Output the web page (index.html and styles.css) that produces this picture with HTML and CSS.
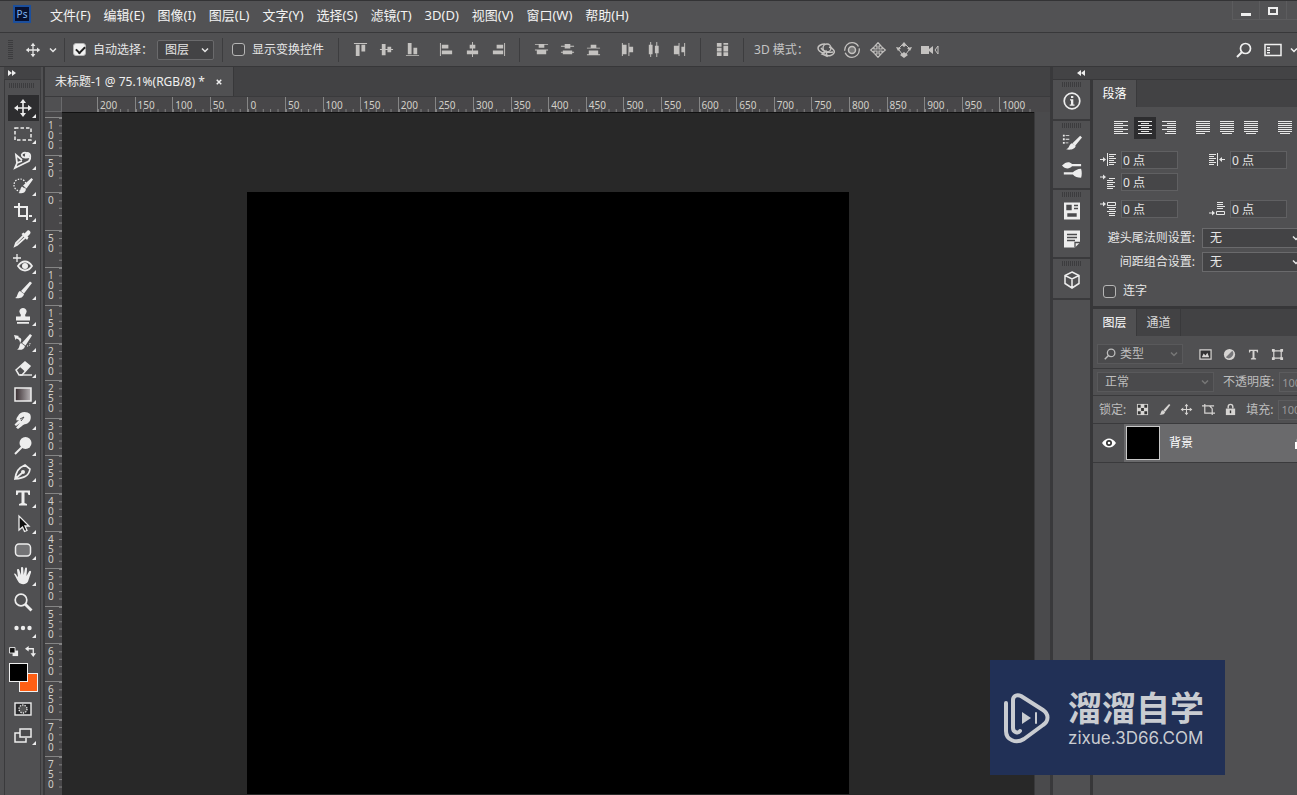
FILE: index.html
```html
<!DOCTYPE html>
<html lang="zh-CN">
<head>
<meta charset="utf-8">
<title>未标题-1</title>
<link rel="stylesheet" href="styles.css">
</head>
<body>
<svg class="sprite" aria-hidden="true">
  <symbol id="move" viewBox="0 0 20 20"><path d="M10 3v14M3 10h14" stroke="currentColor" stroke-width="1.6"/><path d="M10 1l3 4H7zM10 19l3-4H7zM1 10l4-3v6zM19 10l-4-3v6z" fill="currentColor"/></symbol>
  <symbol id="chev" viewBox="0 0 10 10"><path d="M2 3.500l3 3 3-3" fill="none" stroke="currentColor" stroke-width="1.500"/></symbol>
  <symbol id="marquee" viewBox="0 0 20 20"><rect x="2" y="4" width="16" height="12" fill="none" stroke="currentColor" stroke-width="1.500" stroke-dasharray="3.500 2"/></symbol>
  <symbol id="lasso" viewBox="0 0 20 20"><path d="M9 10L3 5l1 8-2 5 8-4 6-3c2-3 2-8-2-8-4-1-6 1-5 3 1 2 5 2 8 1M4 13l5-2M12 4h4M12 6h4" fill="none" stroke="currentColor" stroke-width="1.800"/></symbol>
  <symbol id="quick" viewBox="0 0 20 20"><circle cx="7" cy="9" r="6" fill="none" stroke="currentColor" stroke-width="1.200" stroke-dasharray="1.500 1.300"/><path d="M18.500 2l1.500 1.500-6.500 9-3.500-3zM9 10.500l4 3c-1 4-4 4-7.500 3.500 2-1 1.500-5 3.500-6.500z" fill="currentColor"/></symbol>
  <symbol id="crop" viewBox="0 0 20 20"><path d="M6 1v13h8M1 5h13v13M16 14h3" fill="none" stroke="currentColor" stroke-width="2"/></symbol>
  <symbol id="dropper" viewBox="0 0 20 20"><path d="M4 17l-2 1 1-3 8-8 2 2z" fill="none" stroke="currentColor" stroke-width="1.800"/><path d="M8.500 6l2-1.500 1 1L14 3c1-2 5 1 3 3l-2.500 2.500 1 1L14 12z" fill="currentColor"/></symbol>
  <symbol id="heal" viewBox="0 0 20 20"><path d="M4 0v8M0 4h8" stroke="currentColor" stroke-width="1.300"/><path d="M5 12c4-6 10-6 14 0-4 6-10 6-14 0z" fill="none" stroke="currentColor" stroke-width="1.800"/><circle cx="12" cy="12" r="3" fill="currentColor"/></symbol>
  <symbol id="brush" viewBox="0 0 20 20"><path d="M17 1.500L19 3l-8 10.500-3-2.500zM7 11l4 3c-1 4.500-5.500 4.500-9 4 3-1 2-6 5-7z" fill="currentColor"/></symbol>
  <symbol id="stamp" viewBox="0 0 20 20"><path d="M10 2a3.500 3.500 0 0 1 3 5.500c-1 1-1 2-.5 3H17v4H3v-4h4.500c.5-1 .5-2-.5-3A3.500 3.500 0 0 1 10 2zM4 16h12v1.700H4z" fill="currentColor"/></symbol>
  <symbol id="history" viewBox="0 0 20 20"><path d="M17 2l2 1.500-6.500 10-3.500-2.500zM8 11l4 3c-1 4.500-5 4-8 3.500 3-1 2-5.500 4-6.500zM1 3l5 1-1 1c4 1 4 3 2 6C7 8 5 7 3.500 6.500l-1 1.500z" fill="currentColor"/><path d="M14 14c3 0 3-1 3-3" fill="none" stroke="currentColor" stroke-dasharray="1 1"/></symbol>
  <symbol id="eraser" viewBox="0 0 20 20"><path d="M3 12l9-8 5 4-8 9H6z" fill="none" stroke="currentColor" stroke-width="1.500"/><path d="M7 9l5-5 5 4-5 5.500z" fill="currentColor"/><path d="M7 17h12" stroke="currentColor" stroke-width="1.400"/></symbol>
  <symbol id="gradient" viewBox="0 0 20 20"><defs><linearGradient id="gg"><stop stop-color="#352a2d"/><stop offset="1" stop-color="#b8b4b6"/></linearGradient></defs><rect x="2" y="4" width="16" height="13" fill="url(#gg)" stroke="currentColor" stroke-width="1.500"/></symbol>
  <symbol id="smudge" viewBox="0 0 20 20"><path d="M5 6c2-5 9-5 12-2 2 4 0 9-4 10-2 0-3 1-4 2l-4 3-2-1.500 4-4.500-4 3-1.500-1.500L6 10l-2.500.5C3 9 4 7 5 6z" fill="currentColor"/><path d="M7 9l4-2-3 4" fill="none" stroke="#505052"/></symbol>
  <symbol id="dodge" viewBox="0 0 20 20"><circle cx="12.500" cy="7" r="6" fill="currentColor"/><path d="M9 11l-7 7" stroke="currentColor" stroke-width="2"/></symbol>
  <symbol id="pen" viewBox="0 0 20 20"><path d="M2 17c1-7 3-11 10-14l5 4c-1 7-6 9-15 10zM2 17l7-6" fill="none" stroke="currentColor" stroke-width="1.700"/><circle cx="10" cy="10" r="2" fill="currentColor"/></symbol>
  <symbol id="type" viewBox="0 0 20 20"><path d="M3 2.500h14V7h-1.500L14.500 4.500H11.500V15l2.500 1v1.500H6V16l2.500-1V4.500h-3L4.500 7H3z" fill="currentColor"/></symbol>
  <symbol id="arrow" viewBox="0 0 20 20"><path d="M6 2v14l3.500-3 2 4.500 2.500-1-2-4.500h4z" fill="#111" stroke="currentColor" stroke-width="1.300"/></symbol>
  <symbol id="shape" viewBox="0 0 20 20"><rect x="2.500" y="4" width="15" height="12" rx="3.500" fill="#747476" stroke="currentColor" stroke-width="1.500"/></symbol>
  <symbol id="hand" viewBox="0 0 20 20"><path d="M1 8c1-1 2 0 3 2l1 1L4 4c0-1.500 2-1.500 2.300 0L8 9V2c0-1.500 2-1.500 2.200 0l.5 7L12 2.500c.3-1.500 2.300-1 2 .5L13.500 10 16 5.500c1-1.500 2.500-.5 2 1l-3 9c-2 4-8 3-9.500.5-2-3-3-6-4.500-8z" fill="currentColor"/></symbol>
  <symbol id="zoom" viewBox="0 0 20 20"><circle cx="8" cy="8" r="5.800" fill="none" stroke="currentColor" stroke-width="1.700"/><path d="M12 12l6.500 6.500" stroke="currentColor" stroke-width="2.800"/></symbol>
  <symbol id="dots" viewBox="0 0 20 20"><g fill="currentColor"><circle cx="3.500" cy="10" r="2.200"/><circle cx="10" cy="10" r="2.200"/><circle cx="16.500" cy="10" r="2.200"/></g></symbol>
  <symbol id="mask" viewBox="0 0 20 20"><rect x="2" y="4" width="16" height="12" fill="#29292b" stroke="currentColor" stroke-width="1.400"/><circle cx="10" cy="10" r="4" fill="#555" stroke="currentColor" stroke-width="1.300" stroke-dasharray="1.300 1.200"/></symbol>
  <symbol id="screen" viewBox="0 0 20 20"><path d="M7 8H2v9h11v-4" fill="none" stroke="currentColor" stroke-width="1.500"/><rect x="7" y="4" width="11" height="8" fill="#4b4b4d" stroke="currentColor" stroke-width="1.500"/></symbol>
  <symbol id="reset" viewBox="0 0 12 12"><path d="M5 5h6v6H5z" fill="currentColor"/><path d="M1.700 1.700h6v6h-6z" fill="#111" stroke="currentColor"/></symbol>
  <symbol id="swap" viewBox="0 0 12 12"><path d="M3 3h6v6" fill="none" stroke="currentColor" stroke-width="1.400"/><path d="M0 3l4-3v6zM9 12L6 8h6z" fill="currentColor"/></symbol>

  <symbol id="al-t" viewBox="0 0 16 16"><path d="M1 1h14v1H1zM3 3h4v12H3zM9 3h4v7H9z" fill="currentColor"/></symbol>
  <symbol id="al-m" viewBox="0 0 16 16"><path d="M1 7.500h14v1H1zM3 2h4v12H3zM9 5h4v6H9z" fill="currentColor"/></symbol>
  <symbol id="al-b" viewBox="0 0 16 16"><path d="M1 14h14v1H1zM3 1h4v12H3zM9 6h4v7H9z" fill="currentColor"/></symbol>
  <symbol id="al-l" viewBox="0 0 16 16"><path d="M1 1h1v14H1zM3 3h7v4H3zM3 9h11v4H3z" fill="currentColor"/></symbol>
  <symbol id="al-c" viewBox="0 0 16 16"><path d="M7.500 0h1v16h-1zM5 3h6v4H5zM2 9h12v4H2z" fill="currentColor"/></symbol>
  <symbol id="al-r" viewBox="0 0 16 16"><path d="M14 1h1v14h-1zM6 3h7v4H6zM2 9h11v4H2z" fill="currentColor"/></symbol>
  <symbol id="di-t" viewBox="0 0 16 16"><path d="M1 2h14v1H1zM5 3h6v3H5zM1 8h14v1H1zM3 9h10v4H3z" fill="currentColor"/></symbol>
  <symbol id="di-m" viewBox="0 0 16 16"><path d="M1 4h14v1H1zM5 2h6v5H5zM1 10.500h14v1H1zM3 9h10v4H3z" fill="currentColor"/></symbol>
  <symbol id="di-b" viewBox="0 0 16 16"><path d="M1 6h14v1H1zM5 3h6v3H5zM1 13h14v1H1zM3 9h10v4H3z" fill="currentColor"/></symbol>
  <symbol id="di-l" viewBox="0 0 16 16"><path d="M2 1h1v14H2zM3 3h4v10H3zM9 1h1v14H9zM10 5h4v6h-4z" fill="currentColor"/></symbol>
  <symbol id="di-c" viewBox="0 0 16 16"><path d="M4.500 0h1v16h-1zM3 3h4v10H3zM11 0h1v16h-1zM9.500 4h4v8h-4z" fill="currentColor"/></symbol>
  <symbol id="di-r" viewBox="0 0 16 16"><path d="M7 1h1v14H7zM2 4h5v9H2zM13 1h1v14h-1zM10 5h3v6h-3z" fill="currentColor"/></symbol>
  <symbol id="auto" viewBox="0 0 16 16"><path d="M2 1h5v4H2zM2 6h5v4H2zM2 11h5v4H2zM9 1h5v2H9zM9 4h5v6H9zM9 11h5v4H9z" fill="currentColor"/></symbol>
  <symbol id="orbit" viewBox="0 0 18 16"><path d="M8 11C3 11 1 8 1 6s3-4 7-4M12 5c4 1 6 4 5 6s-5 4-9 2" fill="none" stroke="currentColor" stroke-width="1.500"/><circle cx="10" cy="6" r="4" fill="none" stroke="currentColor" stroke-width="1.400"/><path d="M4 6c3 4 7 5 12 4M9 9l-4 3 5 2z" fill="none" stroke="currentColor" stroke-width="1.400"/></symbol>
  <symbol id="roll" viewBox="0 0 16 16"><circle cx="8" cy="8" r="7.300" fill="none" stroke="currentColor" stroke-width="1.300" stroke-dasharray="20 2"/><circle cx="8" cy="8" r="3.500" fill="#777" stroke="currentColor" stroke-width="1.500"/></symbol>
  <symbol id="pan" viewBox="0 0 16 16"><path d="M8 .7L11 4H9v3h3V5l3.300 3L12 11V9H9v3h2l-3 3.300L5 12h2V9H4v2L.7 8 4 5v2h3V4H5z" fill="none" stroke="currentColor" stroke-width="1.200"/></symbol>
  <symbol id="slide" viewBox="0 0 18 16"><path d="M9 0l2.500 3L9 5 6.500 3zM9 16l4-3-4-3-4 3zM1 5l5 1-3 3zM17 5l-5 1 3 3z" fill="currentColor"/><path d="M4 6l3-3M14 6l-3-3M4 8l3 4M14 8l-3 4" fill="none" stroke="currentColor"/></symbol>
  <symbol id="cam" viewBox="0 0 18 14"><path d="M0 3h8v8H0zM8 6l4-3v8L8 8z" fill="currentColor"/><path d="M17 3l-3 4 3 4z" fill="none" stroke="currentColor"/></symbol>
  <symbol id="search" viewBox="0 0 16 16"><circle cx="9.500" cy="6.500" r="5" fill="none" stroke="currentColor" stroke-width="1.700"/><path d="M6 10l-5 5" stroke="currentColor" stroke-width="2"/></symbol>
  <symbol id="space" viewBox="0 0 18 14"><path d="M1 1.500h16v11H1z" fill="none" stroke="currentColor" stroke-width="1.500"/><path d="M3 4h3v1.500H3zM3 6.500h3V8H3zM3 9h3v1.500H3z" fill="currentColor"/></symbol>

  <symbol id="info" viewBox="0 0 20 20"><circle cx="10" cy="10" r="7.800" fill="none" stroke="currentColor" stroke-width="1.700"/><path d="M9 5h2.300v2H9zM8 8.300h3.300V14H9V9.500H8zM7.700 13.500h4.800v1.200H7.700z" fill="currentColor"/></symbol>
  <symbol id="presets" viewBox="0 0 22 20"><path d="M1 2h2v2H1zM4 2.500h4v1H4zM1 6h2v2H1zM4 6.500h4v1H4zM1 10h2v2H1zM4 10.500h3v1H4zM20 3l2 2-7.500 9-3-2.500zM11 11.500l4 3c-1 4-7 4.500-10.500 3.500 4-1 3-5.500 6.500-6.500z" fill="currentColor"/></symbol>
  <symbol id="brushes" viewBox="0 0 22 20"><path d="M0 5c4-4 8-5 11-1.500h10v2.500H11c-3 3.500-8 3-11-1zM2 12.500h10c2-2 5-4 9-4 1 3 1 7 0 10-4 0-7-1-9-3.500H2z" fill="currentColor"/></symbol>
  <symbol id="chars" viewBox="0 0 20 20"><path d="M2 1.500h16v17H2z" fill="currentColor"/><path d="M5 4.500h4v4H5zM12 4.500h4M12 7.500h4M6 13h8v2H6z" fill="#4b4b4d" stroke="#4b4b4d" stroke-width="1.400"/></symbol>
  <symbol id="notes" viewBox="0 0 20 20"><path d="M2 1.500h16v12L13 18.500H2z" fill="currentColor"/><path d="M5 5.500h10M5 8.500h10M5 11.500h8M13 18.500v-5h5" fill="none" stroke="#4b4b4d" stroke-width="1.300"/></symbol>
  <symbol id="cube" viewBox="0 0 20 20"><path d="M10 2l7 3.500v8L10 18l-7-4.500v-8zM3 5.500L10 9l7-3.500M10 9v9" fill="none" stroke="currentColor" stroke-width="1.500"/></symbol>

  <symbol id="p-l" viewBox="0 0 16 16"><path d="M1 1.500h14M1 3.500h9M1 5.500h14M1 7.500h9M1 9.500h14M1 11.500h9M1 13.500h14" stroke="currentColor"/></symbol>
  <symbol id="p-c" viewBox="0 0 16 16"><path d="M1 1.500h14M4 3.500h8M1 5.500h14M4 7.500h8M1 9.500h14M4 11.500h8M1 13.500h14" stroke="currentColor"/></symbol>
  <symbol id="p-r" viewBox="0 0 16 16"><path d="M1 1.500h14M6 3.500h9M1 5.500h14M6 7.500h9M1 9.500h14M6 11.500h9M4 13.500h11" stroke="currentColor"/></symbol>
  <symbol id="p-j" viewBox="0 0 16 16"><path d="M1 1.500h14M1 3.500h14M1 5.500h14M1 7.500h14M1 9.500h14M1 11.500h14M1 13.500h9" stroke="currentColor"/></symbol>
  <symbol id="p-f" viewBox="0 0 16 16"><path d="M1 1.500h14M1 3.500h14M1 5.500h14M1 7.500h14M1 9.500h14M1 11.500h14M3 13.500h10" stroke="currentColor"/></symbol>
  <symbol id="i-l" viewBox="0 0 16 16"><path d="M0 7.500h4M7.500 1v13M9 2.500h7M9 4.500h5M9 6.500h7M9 8.500h5M9 10.500h7M9 12.500h5" stroke="currentColor"/><path d="M3 5L6 7.500 3 10z" fill="currentColor"/></symbol>
  <symbol id="i-r" viewBox="0 0 16 16"><path d="M12 7.500h4M8.500 1v13M0 2.500h7M0 4.500h5M0 6.500h7M0 8.500h5M0 10.500h7M0 12.500h5" stroke="currentColor"/><path d="M13 5l-3 2.500 3 2.500z" fill="currentColor"/></symbol>
  <symbol id="i-f" viewBox="0 0 16 16"><path d="M0 3h4M9 4.500h6M7 6.500h6M7 8.500h8M7 10.500h6M7 12.500h8M7 14.500h6" stroke="currentColor"/><path d="M3 .5L6 3 3 5.500z" fill="currentColor"/></symbol>
  <symbol id="i-b" viewBox="0 0 16 16"><path d="M0 3h4M7.500 1.500h8v3h-8zM7 6.500h9M9 8.500h6M7 10.500h9M9 12.500h6M9 14.500h6" fill="none" stroke="currentColor"/><path d="M3 .5L6 3 3 5.500z" fill="currentColor"/></symbol>
  <symbol id="i-a" viewBox="0 0 16 16"><path d="M0 12h4M8 1.500h6M8 3.500h6M8 5.500h8M8 7.500h6M7.500 10.500h8v3h-8z" fill="none" stroke="currentColor"/><path d="M3 9.500L6 12l-3 2.500z" fill="currentColor"/></symbol>
  <symbol id="f-img" viewBox="0 0 14 14"><path d="M1 2h12v10H1z" fill="#333" stroke="currentColor" stroke-width="1.300"/><path d="M3 10l2-4 2 2 2-3 2 5z" fill="currentColor"/></symbol>
  <symbol id="f-adj" viewBox="0 0 14 14"><circle cx="7" cy="7" r="6" fill="currentColor"/><path d="M3 10l7-7a5 5 0 0 1-7 7z" fill="#77777a"/></symbol>
  <symbol id="f-shape" viewBox="0 0 14 14"><path d="M3 3h8v8H3z" fill="none" stroke="currentColor" stroke-width="1.300"/><path d="M1 1h3v3H1zM10 1h3v3h-3zM1 10h3v3H1zM10 10h3v3h-3z" fill="currentColor"/></symbol>
  <symbol id="check" viewBox="0 0 14 14"><path d="M1 1h12v12H1z" fill="currentColor"/><path d="M2 2h3v3H2zM9 2h3v3H9zM5.500 5.500h3v3h-3zM2 9h3v3H2zM9 9h3v3H9z" fill="#333"/></symbol>
  <symbol id="board" viewBox="0 0 14 14"><path d="M0 3h13M3 1v10h11M11 6v7M8 3l3 3" fill="none" stroke="currentColor" stroke-width="1.300"/></symbol>
  <symbol id="lock" viewBox="0 0 14 14"><path d="M2 6h10v7H2z" fill="currentColor"/><path d="M4.500 6V4a2.500 2.500 0 0 1 5 0v2" fill="none" stroke="currentColor" stroke-width="1.500"/><path d="M7 8v3" stroke="#333" stroke-width="1.500"/></symbol>
  <symbol id="eye" viewBox="0 0 14 14"><path d="M0 7c4-6 10-6 14 0-4 6-10 6-14 0z" fill="currentColor"/><circle cx="7" cy="7" r="3" fill="#333"/><circle cx="7" cy="7" r="1.300" fill="currentColor"/></symbol>
</svg>

<div class="app">
  <header class="menubar">
    <span class="logo">Ps</span>
    <nav class="menus">
      <button>文件(F)</button><button>编辑(E)</button><button>图像(I)</button><button>图层(L)</button><button>文字(Y)</button><button>选择(S)</button><button>滤镜(T)</button><button>3D(D)</button><button>视图(V)</button><button>窗口(W)</button><button>帮助(H)</button>
    </nav>
    <div class="winbtns">
      <button aria-label="最小化"><i class="min"></i></button><button aria-label="最大化"><i class="max"></i></button><button aria-label="关闭"></button>
    </div>
  </header>

  <div class="options">
    <i class="vgrip"></i>
    <button class="toolpick" aria-label="移动工具"><svg class="i16"><use href="#move"/></svg><svg class="i10"><use href="#chev"/></svg></button>
    <i class="sep"></i>
    <label class="opt"><input type="checkbox" checked>自动选择：</label>
    <span class="pick"><select aria-label="自动选择"><option>图层</option></select><svg class="i10"><use href="#chev"/></svg></span>
    <i class="sep"></i>
    <label class="opt transform"><input type="checkbox">显示变换控件</label>
    <i class="sep"></i>
    <div class="grp"><button aria-label="顶对齐"><svg><use href="#al-t"/></svg></button><button aria-label="垂直居中对齐"><svg><use href="#al-m"/></svg></button><button aria-label="底对齐"><svg><use href="#al-b"/></svg></button></div>
    <div class="grp"><button aria-label="左对齐"><svg><use href="#al-l"/></svg></button><button aria-label="水平居中对齐"><svg><use href="#al-c"/></svg></button><button aria-label="右对齐"><svg><use href="#al-r"/></svg></button></div>
    <i class="sep"></i>
    <div class="grp"><button aria-label="按顶分布"><svg><use href="#di-t"/></svg></button><button aria-label="垂直居中分布"><svg><use href="#di-m"/></svg></button><button aria-label="按底分布"><svg><use href="#di-b"/></svg></button></div>
    <div class="grp"><button aria-label="按左分布"><svg><use href="#di-l"/></svg></button><button aria-label="水平居中分布"><svg><use href="#di-c"/></svg></button><button aria-label="按右分布"><svg><use href="#di-r"/></svg></button></div>
    <i class="sep"></i>
    <div class="grp"><button aria-label="自动对齐"><svg><use href="#auto"/></svg></button></div>
    <i class="sep"></i>
    <span class="mode">3D 模式：</span>
    <div class="grp three"><button aria-label="环绕"><svg><use href="#orbit"/></svg></button><button aria-label="滚动"><svg><use href="#roll"/></svg></button><button aria-label="平移"><svg><use href="#pan"/></svg></button><button aria-label="滑动"><svg><use href="#slide"/></svg></button><button aria-label="变焦"><svg><use href="#cam"/></svg></button></div>
    <div class="tail"><button aria-label="搜索"><svg class="i16"><use href="#search"/></svg></button><button aria-label="工作区"><svg class="i18"><use href="#space"/></svg><svg class="i10"><use href="#chev"/></svg></button></div>
  </div>

  <main class="main">
    <aside class="toolcol">
      <button class="expand" aria-label="展开工具栏"><svg class="dbl" viewBox="0 0 8 6"><path d="M0 0l4 3-4 3zM4 0l4 3-4 3z" fill="currentColor"/></svg></button>
      <div class="tools">
        <i class="hgrip"></i>
        <button class="on" aria-label="移动"><svg><use href="#move"/></svg></button>
        <button aria-label="选框"><svg><use href="#marquee"/></svg></button>
        <button aria-label="套索"><svg><use href="#lasso"/></svg></button>
        <button aria-label="快速选择"><svg><use href="#quick"/></svg></button>
        <button aria-label="裁剪"><svg><use href="#crop"/></svg></button>
        <button aria-label="吸管"><svg><use href="#dropper"/></svg></button>
        <button aria-label="红眼"><svg><use href="#heal"/></svg></button>
        <button aria-label="画笔"><svg><use href="#brush"/></svg></button>
        <button aria-label="图章"><svg><use href="#stamp"/></svg></button>
        <button aria-label="历史画笔"><svg><use href="#history"/></svg></button>
        <button aria-label="橡皮擦"><svg><use href="#eraser"/></svg></button>
        <button aria-label="渐变"><svg><use href="#gradient"/></svg></button>
        <button aria-label="涂抹"><svg><use href="#smudge"/></svg></button>
        <button aria-label="减淡"><svg><use href="#dodge"/></svg></button>
        <button aria-label="钢笔"><svg><use href="#pen"/></svg></button>
        <button aria-label="文字"><svg><use href="#type"/></svg></button>
        <button aria-label="路径选择"><svg><use href="#arrow"/></svg></button>
        <button aria-label="圆角矩形"><svg><use href="#shape"/></svg></button>
        <button aria-label="抓手"><svg><use href="#hand"/></svg></button>
        <button class="single" aria-label="缩放"><svg><use href="#zoom"/></svg></button>
        <button aria-label="更多"><svg><use href="#dots"/></svg></button>
        <div class="mini"><svg><use href="#reset"/></svg><svg><use href="#swap"/></svg></div>
        <div class="swatches"><button class="back" aria-label="背景色"></button><button class="fore" aria-label="前景色"></button></div>
        <button class="single" aria-label="快速蒙版"><svg><use href="#mask"/></svg></button>
        <button aria-label="屏幕模式"><svg><use href="#screen"/></svg></button>
      </div>
    </aside>

    <section class="doc">
      <div class="tabs"><div class="tab"><span>未标题-1 @ 75.1%(RGB/8) *</span><button aria-label="关闭文档"><svg viewBox="0 0 8 8"><path d="M1 1l6 6M7 1L1 7" stroke="currentColor" stroke-width="2"/></svg></button></div></div>
      <div class="view">
        <div class="corner"></div>
        <div class="ruler-x">
          <div class="run"><span>200</span><span>150</span><span>100</span><span>50</span><span>0</span></div>
          <div class="run"><span>50</span><span>100</span><span>150</span><span>200</span><span>250</span></div>
          <div class="run"><span>300</span><span>350</span><span>400</span><span>450</span><span>500</span></div>
          <div class="run"><span>550</span><span>600</span><span>650</span><span>700</span><span>750</span></div>
          <div class="run"><span>800</span><span>850</span><span>900</span><span>950</span><span>1000</span></div>
        </div>
        <div class="ruler-y">
          <div class="run"><span>100</span><span>50</span><span>0</span><span>50</span><span>100</span></div>
          <div class="run"><span>150</span><span>200</span><span>250</span><span>300</span><span>350</span></div>
          <div class="run"><span>400</span><span>450</span><span>500</span><span>550</span><span>600</span></div>
          <div class="run"><span>650</span><span>700</span><span>750</span></div>
        </div>
        <div class="stage"><div class="page"></div></div>
        <div class="scroll"></div>
      </div>
    </section>

    <div class="dock">
      <button class="collapse" aria-label="折叠面板"><svg class="dbl" viewBox="0 0 8 6"><path d="M4 0L0 3l4 3zM8 0L4 3l4 3z" fill="currentColor"/></svg></button>
      <div class="cols">
        <aside class="strip">
          <div class="set"><i class="hgrip"></i><button aria-label="信息"><svg><use href="#info"/></svg></button></div>
          <div class="set"><i class="hgrip"></i><button aria-label="画笔预设"><svg><use href="#presets"/></svg></button><button aria-label="画笔"><svg><use href="#brushes"/></svg></button></div>
          <div class="set"><i class="hgrip"></i><button aria-label="字符"><svg><use href="#chars"/></svg></button><button aria-label="注释"><svg><use href="#notes"/></svg></button></div>
          <div class="set"><i class="hgrip"></i><button aria-label="3D"><svg><use href="#cube"/></svg></button></div>
        </aside>
        <aside class="panels">
          <section class="para">
            <div class="ptabs"><button class="on">段落</button></div>
            <div class="aligns">
              <button aria-label="左对齐文本"><svg><use href="#p-l"/></svg></button><button class="on" aria-label="居中对齐文本"><svg><use href="#p-c"/></svg></button><button aria-label="右对齐文本"><svg><use href="#p-r"/></svg></button><i></i>
              <button aria-label="最后一行左对齐"><svg><use href="#p-j"/></svg></button><button aria-label="最后一行居中"><svg><use href="#p-f"/></svg></button><button aria-label="最后一行右对齐"><svg><use href="#p-f"/></svg></button><i></i>
              <button aria-label="全部对齐"><svg><use href="#p-f"/></svg></button>
            </div>
            <div class="indents">
              <label><svg><use href="#i-l"/></svg><input value="0 点" aria-label="左缩进"></label>
              <label><svg><use href="#i-r"/></svg><input value="0 点" aria-label="右缩进"></label>
              <label><svg><use href="#i-f"/></svg><input value="0 点" aria-label="首行缩进"></label>
            </div>
            <div class="indents after">
              <label><svg><use href="#i-b"/></svg><input value="0 点" aria-label="段前空格"></label>
              <label><svg><use href="#i-a"/></svg><input value="0 点" aria-label="段后空格"></label>
            </div>
            <div class="rules">
              <label for="kin">避头尾法则设置:</label><span class="pick"><select id="kin"><option>无</option></select><svg class="i10"><use href="#chev"/></svg></span>
              <label for="moj">间距组合设置:</label><span class="pick"><select id="moj"><option>无</option></select><svg class="i10"><use href="#chev"/></svg></span>
            </div>
            <label class="opt hyphen"><input type="checkbox">连字</label>
          </section>
          <section class="layers">
            <div class="ptabs"><button class="on">图层</button><button>通道</button></div>
            <div class="row filter">
              <span class="pick"><svg class="i12"><use href="#search"/></svg><select aria-label="类型"><option>类型</option></select><svg class="i10 dim"><use href="#chev"/></svg></span>
              <div class="ficons"><button aria-label="像素"><svg><use href="#f-img"/></svg></button><button aria-label="调整"><svg><use href="#f-adj"/></svg></button><button aria-label="文字图层"><svg><use href="#type"/></svg></button><button aria-label="形状"><svg><use href="#f-shape"/></svg></button></div>
            </div>
            <div class="row blend">
              <span class="pick"><select aria-label="混合模式"><option>正常</option></select><svg class="i10 dim"><use href="#chev"/></svg></span>
              <label for="opa">不透明度:</label><input id="opa" value="100%">
            </div>
            <div class="row locks">
              <span>锁定:</span>
              <div class="ficons"><button aria-label="锁定透明像素"><svg><use href="#check"/></svg></button><button aria-label="锁定图像像素"><svg><use href="#brush"/></svg></button><button aria-label="锁定位置"><svg><use href="#move"/></svg></button><button aria-label="锁定画板"><svg><use href="#board"/></svg></button><button aria-label="锁定全部"><svg><use href="#lock"/></svg></button></div>
              <label for="fil">填充:</label><input id="fil" value="100%">
            </div>
            <div class="layer">
              <button class="vis" aria-label="可见性"><svg><use href="#eye"/></svg></button>
              <div class="lbody"><span class="thumb"></span><span>背景</span><svg class="lk"><use href="#lock"/></svg></div>
            </div>
          </section>
        </aside>
      </div>
    </div>
  </main>

  <div class="mark">
    <svg viewBox="0 0 48 52"><g fill="none" stroke="#c9ccd1" stroke-linecap="round" stroke-linejoin="round"><path d="M17 39c-2 3-7 1-7-3V8c0-4 4-6 8-4l22 14c6 4 6 11 0 15L21 47c-8 5-18 1-18-8V11" stroke-width="4"/><path d="M33 21v10" stroke-width="2"/></g><path d="M19 20l9 6-9 6z" fill="#c9ccd1"/></svg>
    <div><strong>溜溜自学</strong><span>zixue.3D66.COM</span></div>
  </div>
</div>
</body>
</html>
```
FILE: styles.css
```css
* { box-sizing: border-box; }
body {
  margin: 0;
  background: #505052;
  color: #e6e6e6;
  font: 12px/16px "Noto Sans", "Noto Sans CJK SC", sans-serif;
}
.sprite { position: absolute; width: 0; height: 0; }
svg { display: block; flex: none; }
i { display: block; flex: none; }
button, select, input {
  margin: 0;
  padding: 0;
  border: 0;
  border-radius: 0;
  background: none;
  color: inherit;
  font: inherit;
}
button { display: flex; align-items: center; justify-content: center; flex: none; }
select { appearance: none; width: 100%; height: 100%; padding-left: 7px; }
.app { position: relative; display: flex; flex-direction: column; height: 100vh; overflow: hidden; }
.i10 { width: 10px; height: 10px; }
.i12 { width: 12px; height: 12px; }
.i16 { width: 16px; height: 16px; }
.i18 { width: 18px; height: 14px; }

/* menu bar */
.menubar { display: flex; flex: none; height: 33px; border-top: 1px solid #333335; border-bottom: 1px solid #38383a; background: #525254; }
.logo { margin: 4px 19px 0 13px; width: 18px; height: 18px; border: 2px solid #1c4f9c; background: #07102f; color: #7fb6f4; font-size: 10px; line-height: 14px; text-align: center; }
.menus { display: flex; flex: 1; gap: 13px; padding-bottom: 3px; color: #f2f2f2; font-size: 13px; }
.winbtns { display: flex; height: 19px; margin-right: -16px; }
.winbtns button { width: 27px; border: 1px solid #5c5c5e; border-top: 0; border-right: 0; }
.min { width: 10px; height: 3px; margin-top: 8px; background: #eee; }
.max { width: 10px; height: 8px; margin-top: 2px; border: 2px solid #eee; }

/* options bar */
.options { display: flex; flex: none; align-items: center; height: 34px; padding-left: 8px; border-bottom: 1px solid #373739; background: #505052; overflow: hidden; }
.vgrip { width: 5px; height: 20px; background: repeating-linear-gradient(#3c3c3e 0 1px, transparent 1px 2px); }
.toolpick { width: 43px; padding-left: 12px; gap: 7px; justify-content: flex-start; }
.sep { width: 1px; height: 24px; margin: 0 8px; background: #3d3d3f; }
.opt { display: flex; align-items: center; flex: none; gap: 7px; }
.opt input { appearance: none; width: 13px; height: 13px; border: 1px solid #b5b5b5; border-radius: 3px; background: #464648; }
.opt input:checked { background: #f2f2f2; }
.opt input:checked::after { content: ""; display: block; width: 7px; height: 4px; margin: 2px; border: solid #222; border-width: 0 0 2px 2px; transform: rotate(-45deg); }
.pick { position: relative; display: flex; align-items: center; border: 1px solid #6a6a6c; background: #434345; }
.pick .i10 { position: absolute; right: 3px; top: 50%; margin-top: -5px; pointer-events: none; }
.options .pick { width: 57px; height: 20px; margin-left: 4px; border-radius: 2px; }
.transform { margin-right: 6px; margin-left: 1px; }
.grp { display: flex; flex: none; margin-right: 8px; color: #c4c2c0; }
.grp button { width: 26px; height: 26px; }
.grp svg { width: 15px; height: 15px; }
.grp + .sep { margin-left: 0; }
.three svg { width: 18px; height: 16px; }
.mode { width: 59px; flex: none; margin-left: 2px; color: #c4c4c4; }
.tail { display: flex; gap: 12px; margin-left: auto; margin-right: -2px; color: #f0f0f0; }
.tail button { gap: 7px; }

/* main area */
.main { display: flex; flex: 1; min-height: 0; }
.dbl { width: 8px; height: 6px; }
.hgrip { height: 5px; margin: 0 9px; background: repeating-linear-gradient(90deg, #3c3c3e 0 1px, transparent 1px 2px); }
.toolcol { flex: none; width: 45px; padding: 0 2px 0 4px; border-right: 2px solid #39393b; background: #505052; }
.expand { width: 100%; height: 12px; padding-right: 21px; background: #434345; color: #eee; }
.tools { display: flex; flex-direction: column; height: 100%; padding: 3px 0 0 3px; border: solid #3a3a3c; border-width: 1px 1px 0; color: #ededed; }
.tools .hgrip { margin: 0 5px 7px 1px; }
.tools > button { position: relative; width: 31px; height: 26px; padding-right: 1px; }
.tools > button svg { width: 20px; height: 20px; }
.tools > button::after { content: ""; position: absolute; right: 3px; bottom: 3px; border-left: 4px solid transparent; border-bottom: 4px solid #ededed; }
.tools > .single::after { display: none; }
.tools > .on { background: #2d2d2f; }
.mini { display: flex; gap: 6px; height: 21px; align-items: center; }
.mini svg { width: 11px; height: 11px; }
.swatches { display: grid; grid-template-columns: 10px 9px 10px; grid-template-rows: 10px 9px 10px; margin: 1px 0 4px 1px; }
.swatches button { border: 1px solid #f0f0f0; }
.back { grid-area: 2 / 2 / 4 / 4; background: #ff5f14; }
.fore { grid-area: 1 / 1 / 3 / 3; background: #000; }

.doc { display: flex; flex: 1; flex-direction: column; min-width: 0; }
.tabs { display: flex; flex: none; height: 29px; background: #424244; }
.tab { display: flex; align-items: center; gap: 11px; padding: 0 11px 0 10px; border-right: 1px solid #38383a; background: #505052; color: #f0f0f0; }
.tab svg { width: 6px; height: 6px; }
.view { display: grid; flex: 1; grid-template-columns: 17px minmax(0, 1fr) 16px; grid-template-rows: 15px minmax(0, 1fr); min-height: 0; border-top: 1px solid #3a3a3c; }
.corner { border: solid #6a6a6c; border-width: 0 1px 1px 0; }
.ruler-x, .ruler-y { display: flex; overflow: hidden; background: #484749; color: #d2cfc8; font: 10px/10px "Noto Sans", sans-serif; }
.ruler-x { grid-column: 2 / 4; padding-left: 35px; }
.ruler-x .run { display: grid; flex: none; width: 188px; grid-template-columns: repeat(5, 1fr); }
.ruler-x span { padding: 3px 0 0 2px; border-left: 1px solid #858585; background: linear-gradient(90deg, #858585 1px, transparent 1px) 0 100% / 20% 3px repeat-x; }
.ruler-y { flex-direction: column; padding-top: 5px; }
.ruler-y .run { display: grid; flex: none; height: 188px; grid-template-rows: repeat(5, 1fr); }
.ruler-y .run:last-child { height: auto; grid-template-rows: 38px 37px 38px; }
.ruler-y span { width: 17px; padding: 2px 8px 0 3px; border-top: 1px solid #858585; background: linear-gradient(#858585 1px, transparent 1px) 100% 0 / 3px 20% repeat-y; word-break: break-all; }
.stage { display: flex; align-items: flex-start; justify-content: center; padding-top: 79px; border-top: 1px solid #111; background: #282828; overflow: hidden; }
.page { flex: none; width: 602px; height: 602px; background: #000; }
.scroll { border-left: 1px solid #39393b; background: #4a4a4c; }

/* docked panels */
.dock { display: flex; flex: none; flex-direction: column; width: 247px; border-left: 3px solid #39393b; }
.collapse { flex: none; height: 12px; justify-content: flex-start; padding-left: 24px; background: #434345; color: #eee; }
.cols { display: flex; flex: 1; }
.strip { width: 40px; border-right: 3px solid #373739; border-top: 1px solid #373739; color: #ededed; }
.set { padding: 2px 0 4px; border-bottom: 2px solid #3a3a3c; }
.set button { width: 100%; height: 28px; }
.set svg { width: 20px; height: 20px; }
.panels { flex: 1; min-width: 0; overflow: hidden; }
.ptabs { display: flex; height: 28px; border-top: 1px solid #373739; background: #424244; }
.ptabs button { width: 44px; border-right: 1px solid #39393b; color: #d8d8d8; }
.ptabs .on { background: #505052; color: #fff; }
.para { height: 229px; border-bottom: 2px solid #373739; }
.aligns { display: flex; align-items: center; height: 33px; padding: 9px 0 0 16px; }
.aligns i { width: 10px; }
.aligns button { width: 22px; height: 22px; margin: 0 1px; }
.aligns svg { width: 16px; height: 16px; }
.aligns .on { background: #2d2d2f; }
.indents { display: grid; grid-template-columns: 78px 78px; gap: 4px 31px; padding: 11px 0 0 7px; }
.indents.after { padding-top: 9px; }
.indents label { display: flex; gap: 5px; align-items: center; }
.indents svg { width: 16px; height: 16px; }
.indents input { width: 57px; height: 18px; padding-left: 1px; border: 1px solid #606062; background: #464648; }
.rules { display: grid; grid-template-columns: 102px 99px; gap: 4px 7px; padding-top: 10px; }
.rules label { text-align: right; line-height: 20px; }
.rules .pick { height: 20px; }
.rules .i10 { right: -1px; }
.hyphen { padding: 11px 0 0 10px; }
.row { display: flex; align-items: center; height: 27px; padding-left: 4px; border-bottom: 1px solid #3a3a3c; color: #bdbdbd; }
.row .pick { flex: none; height: 20px; border-color: #59595b; background: #4a4a4c; }
.dim { color: #777; }
.layers .filter { height: 33px; padding-top: 4px; }
.filter .pick { width: 86px; padding-left: 6px; }
.filter select { padding-left: 4px; }
.ficons { display: flex; color: #d6d4d2; }
.ficons button { width: 24px; height: 20px; }
.ficons svg { width: 13px; height: 13px; }
.filter .ficons { margin-left: 10px; }
.blend .pick { width: 117px; }
.blend label { margin-left: 9px; }
.row input { flex: none; width: 40px; height: 20px; margin-left: 5px; padding-left: 2px; border: 1px solid #5c5c5e; color: #999; font-size: 11px; }
.row span, .row label { flex: none; white-space: nowrap; }
.layers .locks { height: 28px; padding-left: 6px; }
.locks .ficons { margin-left: 5px; }
.locks .ficons button { width: 22px; }
.locks label { margin-left: 5px; }
.layer { display: flex; height: 39px; border-bottom: 1px solid #3a3a3c; }
.vis { width: 31px; color: #fff; }
.vis svg { width: 14px; height: 14px; }
.lbody { display: flex; flex: 1; align-items: center; gap: 9px; padding-left: 2px; background: #6a6a6c; color: #fff; }
.thumb { width: 34px; height: 34px; border: 1px solid #c8c8c8; background: #000; }
.lk { width: 14px; height: 14px; margin-left: auto; margin-right: -10px; }

/* watermark badge */
.mark { position: absolute; right: 72px; bottom: 20px; display: flex; align-items: center; gap: 17px; width: 235px; height: 115px; padding-left: 13px; background: #213056; color: #c9ccd1; }
.mark > svg { width: 48px; height: 52px; }
.mark strong, .mark span { display: block; white-space: nowrap; }
.mark strong { font: 700 34px/38px "Noto Sans CJK SC", sans-serif; }
.mark span { padding-top: 2px; font: 17px/20px Inter, sans-serif; }
```
